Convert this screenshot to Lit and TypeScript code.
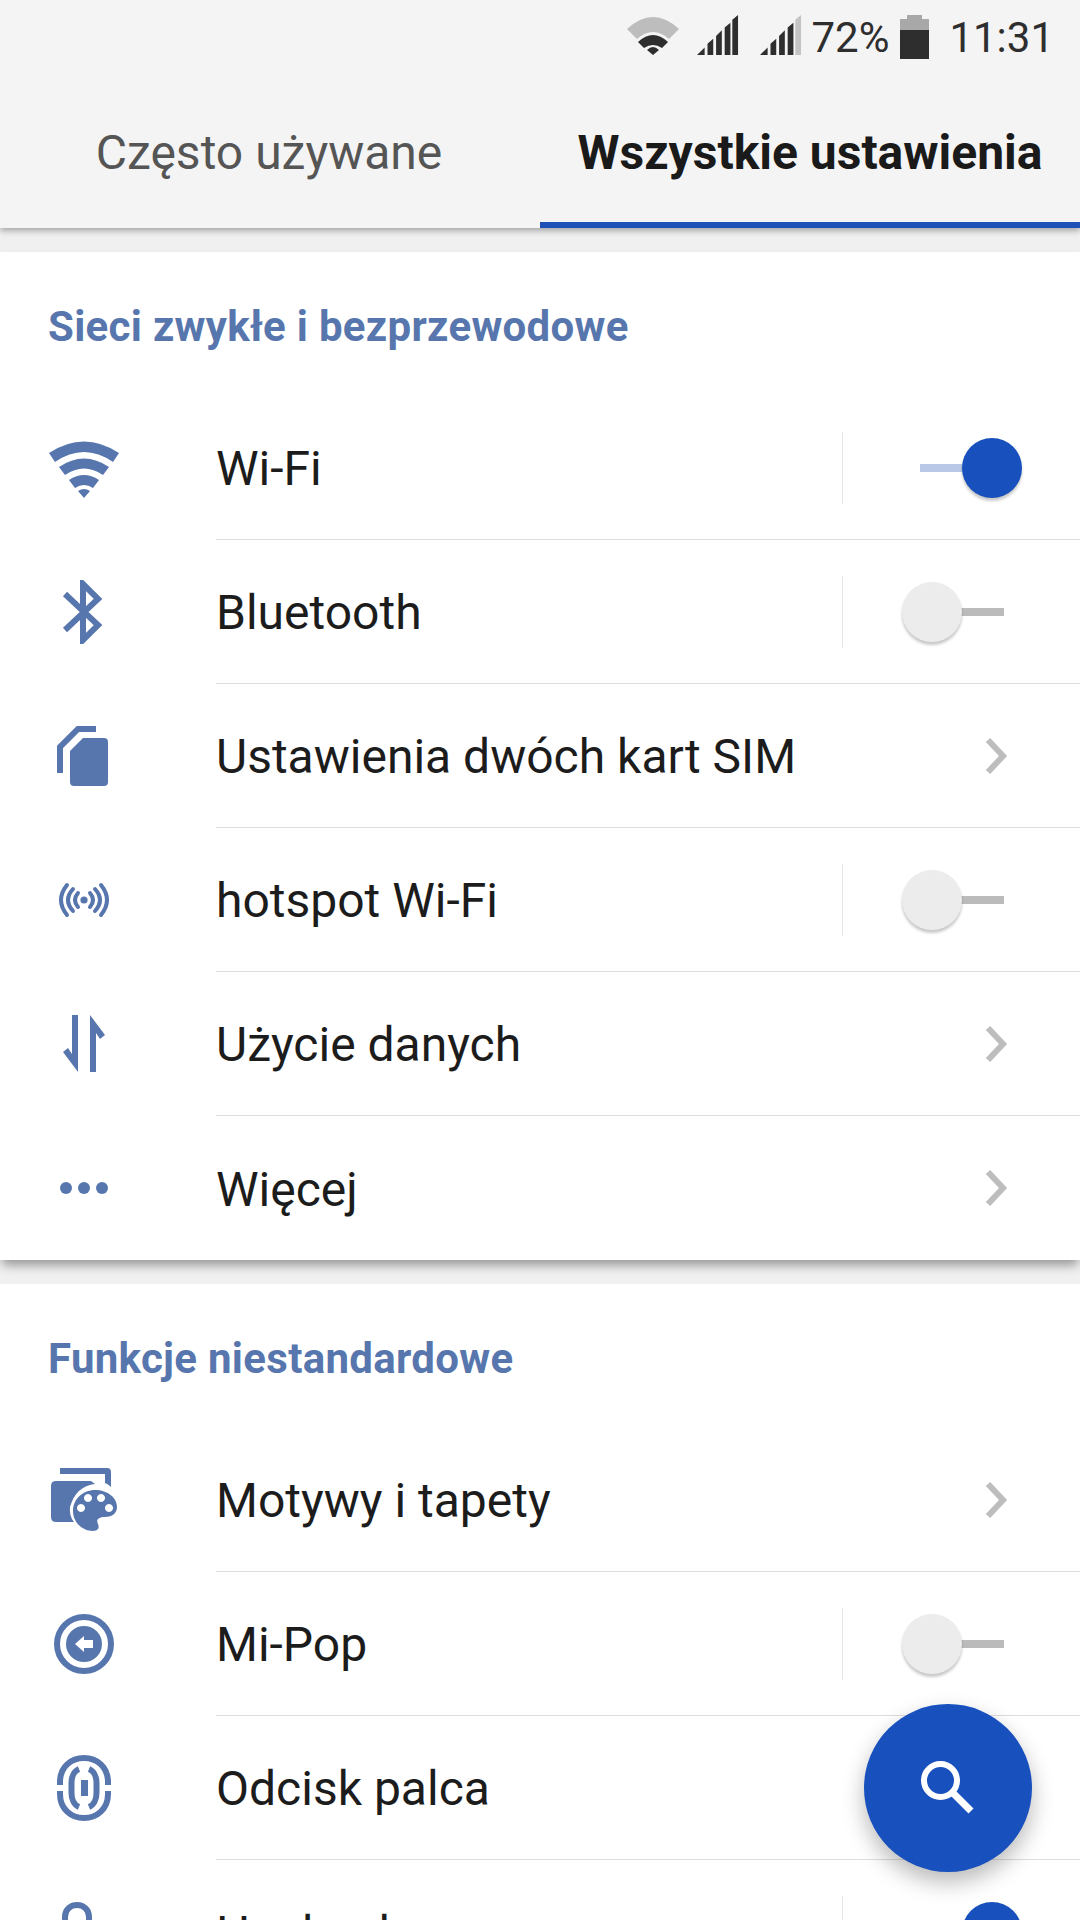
import { LitElement, html, css, svg } from 'lit';
import { customElement, property } from 'lit/decorators.js';

const ICONS: Record<string, any> = {
    wifi: svg`<svg width="72" height="60" viewBox="0 0 72 60"><path d="M1 17 Q36 -6 71 17 L65 26 Q36 6 7 26 Z M11 31 Q36 14 61 31 L55 39 Q36 26 17 39 Z M21 44 Q36 34 51 44 L45 52 Q36 46 27 52 Z M30 55 Q36 51 42 55 L36 62 Z" transform="translate(0 -2)" fill="#5876ae"/></svg>`,
    bluetooth: svg`<svg width="72" height="64" viewBox="0 0 72 64"><path d="M17 14 L50 45 L35 60 V4 L50 19 L17 50" fill="none" stroke="#5876ae" stroke-width="6"/></svg>`,
    sim: svg`<svg width="72" height="70" viewBox="0 0 72 70"><path d="M35 17 H56 Q60 17 60 21 V61 Q60 65 56 65 H26 Q22 65 22 61 V30 Z" fill="#5876ae"/><path d="M48 8 H30 L12 26 V52" fill="none" stroke="#5876ae" stroke-width="6"/></svg>`,
    hotspot: svg`<svg width="72" height="44" viewBox="0 0 72 44"><g fill="none" stroke="#5876ae" stroke-width="4" stroke-linecap="round"><path d="M30 15 Q24 22 30 29 M42 15 Q48 22 42 29 M25 11 Q15 22 25 33 M47 11 Q57 22 47 33 M19 7 Q7 22 19 37 M53 7 Q65 22 53 37"/></g><circle cx="36" cy="22" r="3.6" fill="#5876ae"/></svg>`,
    data: svg`<svg width="72" height="60" viewBox="0 0 72 60"><path d="M24 1 H30 V58 L15 38 L20 34 L24 40 Z M42 58 V1 L57 21 L52 25 L48 19 V58 Z" fill="#5876ae"/></svg>`,
    more: svg`<svg width="72" height="16" viewBox="0 0 72 16"><g fill="#5876ae"><circle cx="18" cy="8" r="6"/><circle cx="36" cy="8" r="6"/><circle cx="54" cy="8" r="6"/></g></svg>`,
    theme: svg`<svg width="72" height="66" viewBox="0 0 72 66"><g fill="#5876ae"><path d="M12 1 H59 Q63 1 63 5 V20 Q60 17 57 16 V7 H12 Z"/><path d="M8 14 H43 L47 17 Q28 19 22 40 Q21 49 26 55 H8 Q3 55 3 50 V19 Q3 14 8 14 Z"/><path fill-rule="evenodd" d="M47 23 C60 23 69 31 69 40 C69 47 63 50 57 50 C50 50 48 53 50 57 C52 62 49 64 45 64 C34 64 25 55 25 44 C25 32 35 23 47 23 Z M40 27 a4 4 0 1 0 0.01 0 Z M53 27 a4 4 0 1 0 0.01 0 Z M33 37 a4 4 0 1 0 0.01 0 Z M61 37 a4 4 0 1 0 0.01 0 Z"/></g></svg>`,
    mipop: svg`<svg width="72" height="60" viewBox="0 0 72 60"><circle cx="36" cy="30" r="27" fill="none" stroke="#5876ae" stroke-width="6"/><circle cx="36" cy="30" r="18" fill="#5876ae"/><path d="M27 30 L36 22 V26 H45 V34 H36 V38 Z" fill="#fff"/></svg>`,
    finger: svg`<svg width="72" height="66" viewBox="0 0 72 66"><g fill="none" stroke="#5876ae" stroke-width="6"><path d="M12 30 V27 C12 12 23 3 36 3 C49 3 60 12 60 27 V30"/><path d="M12 36 V39 C12 54 23 63 36 63 C49 63 60 54 60 39 V36"/><path d="M31 14 C26 16 23.500 22 23.500 28 V38 C23.500 44 26 50 31 52"/><path d="M41 14 C46 16 48.500 22 48.500 28 V38 C48.500 44 46 50 41 52"/></g><rect x="33" y="25" width="7" height="16" fill="#5876ae"/></svg>`,
    lock: svg`<svg width="72" height="72" viewBox="0 0 72 72"><path d="M17 36 V21 C17 14 22 9 29 9 C36 9 41 14 41 21 V36" fill="none" stroke="#5876ae" stroke-width="6"/></svg>`,
};

@customElement('toggle-switch')
export class ToggleSwitch extends LitElement {
    static styles = css`
        :host { display: block; width: 120px; height: 60px; position: relative; }
        .track { position: absolute; top: 26px; height: 8px; width: 44px; }
        .knob { position: absolute; top: 0; width: 60px; height: 60px; border-radius: 50%; }
        .on .track { left: 18px; background: #b8c8e6; }
        .on .knob { left: 60px; background: #1850bd; box-shadow: 0 3px 3px rgba(0,0,0,.22); }
        .off .track { left: 58px; background: #bbbbbb; }
        .off .knob { left: 0; background: #ececec; box-shadow: 0 3px 3px rgba(0,0,0,.22); }
    `;

    @property({ type: Boolean }) active = false;

    render() {
        return html`<div class=${this.active ? 'on' : 'off'}><div class="track"></div><div class="knob"></div></div>`;
    }
}

interface Row { icon: string; label: string; kind: 'on' | 'off' | 'nav'; }

const NETWORK: Row[] = [
    { icon: 'wifi', label: 'Wi-Fi', kind: 'on' },
    { icon: 'bluetooth', label: 'Bluetooth', kind: 'off' },
    { icon: 'sim', label: 'Ustawienia dwóch kart SIM', kind: 'nav' },
    { icon: 'hotspot', label: 'hotspot Wi-Fi', kind: 'off' },
    { icon: 'data', label: 'Użycie danych', kind: 'nav' },
    { icon: 'more', label: 'Więcej', kind: 'nav' },
];

const CUSTOM: Row[] = [
    { icon: 'theme', label: 'Motywy i tapety', kind: 'nav' },
    { icon: 'mipop', label: 'Mi-Pop', kind: 'off' },
    { icon: 'finger', label: 'Odcisk palca', kind: 'nav' },
    { icon: 'lock', label: 'Hasło ekranu', kind: 'on' },
];

@customElement('app-root')
export class AppRoot extends LitElement {
    static styles = css`
        :host { display: block; position: relative; width: 1080px; height: 1920px; overflow: hidden; background: #f0f0f0; font-family: Roboto, "Liberation Sans", sans-serif; }
        .header { height: 228px; background: #f4f4f4; box-shadow: 0 3px 6px rgba(0,0,0,.3); position: relative; }
        .status { height: 74px; display: flex; align-items: center; justify-content: flex-end; padding-right: 26px; color: #2e2e2e; font-size: 42px; }
        .status svg { display: block; flex: none; }
        .wifi { margin-bottom: 2px; }
        .signal1 { margin-left: 18px; margin-bottom: 2px; }
        .signal2 { margin-left: 21px; margin-bottom: 2px; }
        .pct { margin-left: 9px; }
        .battery { margin-left: 11px; }
        .time { margin-left: 20px; }
        .tabs { display: flex; height: 154px; }
        .tab { width: 540px; display: flex; align-items: center; justify-content: center; font-size: 48px; color: #555555; box-sizing: border-box; padding: 2px 2px 0 0; }
        .tab.active { color: #1a1a1a; font-weight: 700; border-bottom: 6px solid #1f50b5; padding: 8px 0 0 0; }
        .card { background: #fff; margin-top: 24px; box-shadow: 0 7px 10px -2px rgba(0,0,0,.38); position: relative; }
        .card.last { box-shadow: none; }
        .title { height: 144px; padding: 50px 0 0 48px; box-sizing: border-box; font-size: 42px; font-weight: 700; color: #5876ae; letter-spacing: .3px; }
        .row { display: flex; height: 144px; align-items: center; }
        .icon { width: 120px; margin-left: 48px; flex: none; display: flex; }
        .icon svg { display: block; }
        .body { flex: 1; height: 144px; margin-left: 48px; min-width: 0; display: flex; align-items: center; justify-content: space-between; border-bottom: 1px solid #dedede; box-sizing: border-box; }
        .row:last-child .body { border-bottom: none; }
        .label { font-size: 48px; color: #1c1c1c; padding-top: 2px; }
        .end { display: flex; align-items: center; }
        .divider { width: 1px; height: 72px; background: #e4e4e4; }
        .sw { width: 237px; display: flex; justify-content: flex-end; padding-right: 58px; box-sizing: border-box; }
        .chev { display: block; margin-right: 71px; }
        .fab { position: absolute; left: 864px; top: 1704px; width: 168px; height: 168px; border-radius: 50%; background: #1850bd; box-shadow: 0 10px 22px rgba(0,0,0,.28); display: flex; align-items: center; justify-content: center; }
    `;

    renderEnd(row: Row) {
        if (row.kind === 'nav') {
            return html`<svg class="chev" width="24" height="36" viewBox="0 0 24 36"><path d="M3 2 L18 18 L3 34" fill="none" stroke="#bdbdbd" stroke-width="6"/></svg>`;
        }
        return html`<div class="end"><div class="divider"></div><div class="sw"><toggle-switch ?active=${row.kind === 'on'}></toggle-switch></div></div>`;
    }

    renderRow(row: Row) {
        return html`
            <div class="row">
                <div class="icon">${ICONS[row.icon]}</div>
                <div class="body">
                    <span class="label">${row.label}</span>
                    ${this.renderEnd(row)}
                </div>
            </div>
        `;
    }

    render() {
        return html`
            <div class="header">
                <div class="status">
                    <svg class="wifi" width="52" height="38" viewBox="0 0 52 38"><path d="M0 12 Q26 -12 52 12 L42 22 Q26 8 10 22 Z" fill="#bdbdbd"/><path d="M11 25 Q26 11 41 25 L35 31 Q26 25 17 31 Z M20 33 Q26 27 32 33 L26 38 Z" fill="#2e2e2e"/></svg>
                    <svg class="signal1" width="42" height="42" viewBox="0 0 44 44"><path d="M0 42 L8 34 V42 Z M11 42 V30 L17 25 V42 Z M20 42 V22 L26 16 V42 Z M29 42 V13 L35 8 V42 Z M37 42 V5 L43 0 V42 Z" fill="#2e2e2e"/></svg>
                    <svg class="signal2" width="42" height="42" viewBox="0 0 44 44"><path d="M0 42 L8 34 V42 Z M11 42 V30 L17 25 V42 Z M20 42 V22 L26 16 V42 Z M29 42 V13 L35 8 V42 Z" fill="#2e2e2e"/><path d="M37 42 V5 L43 0 V42 Z" fill="#c4c4c4"/></svg>
                    <span class="pct">72%</span>
                    <svg class="battery" width="29" height="44" viewBox="0 0 29 44"><path d="M7 0 H22 V4 H29 V15 H0 V4 H7 Z" fill="#a8a8a8"/><rect x="0" y="15" width="29" height="29" fill="#2e2e2e"/></svg>
                    <span class="time">11:31</span>
                </div>
                <div class="tabs">
                    <div class="tab">Często używane</div>
                    <div class="tab active">Wszystkie ustawienia</div>
                </div>
            </div>
            <div class="card">
                <div class="title">Sieci zwykłe i bezprzewodowe</div>
                ${NETWORK.map((r) => this.renderRow(r))}
            </div>
            <div class="card last">
                <div class="title">Funkcje niestandardowe</div>
                ${CUSTOM.map((r) => this.renderRow(r))}
            </div>
            <div class="fab">
                <svg width="60" height="60" viewBox="0 0 60 60"><circle cx="22.500" cy="22.500" r="16.500" fill="none" stroke="#fff" stroke-width="6"/><path d="M34 34 L53 53" stroke="#fff" stroke-width="7"/></svg>
            </div>
        `;
    }
}
